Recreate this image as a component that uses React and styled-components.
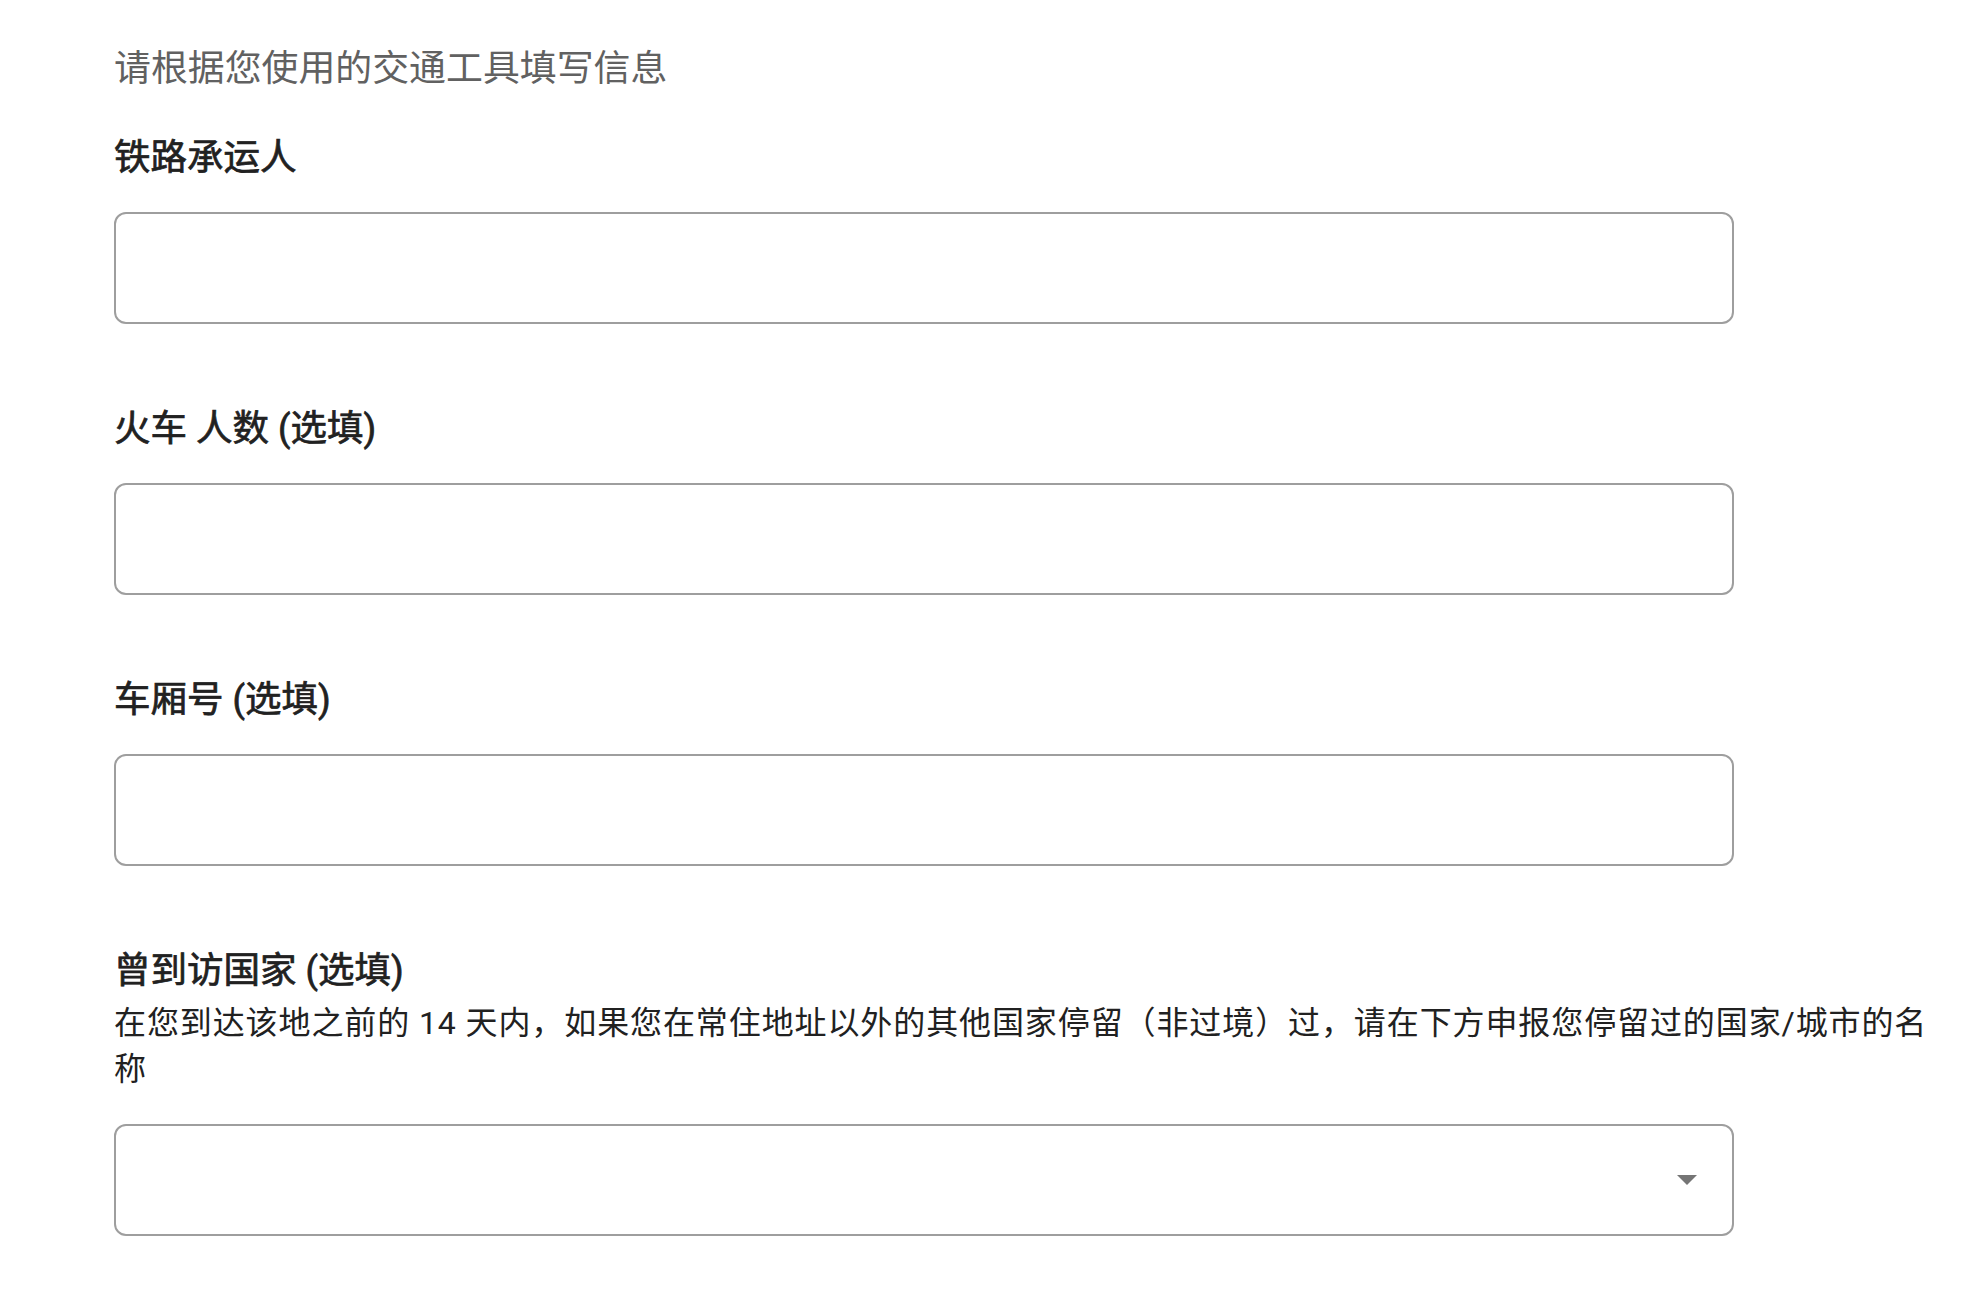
import React from "react";
import styled, { createGlobalStyle } from "styled-components";

const GlobalStyle = createGlobalStyle`
  body {
    margin: 0;
    background: #ffffff;
    font-family: Roboto, "Noto Sans CJK SC", sans-serif;
  }
`;

const fields = [
  { id: "carrier", label: "铁路承运人" },
  { id: "passengers", label: "火车 人数 (选填)" },
  { id: "coach", label: "车厢号 (选填)" },
];

const App = () => {
  return (
    <>
      <GlobalStyle />
      <Page>
        <Intro>请根据您使用的交通工具填写信息</Intro>
        {fields.map((field) => (
          <Field key={field.id}>
            <Label htmlFor={field.id}>{field.label}</Label>
            <Input id={field.id} type="text" />
          </Field>
        ))}
        <Field last>
          <Label>曾到访国家 (选填)</Label>
          <Hint>
            在您到达该地之前的 14 天内，如果您在常住地址以外的其他国家停留（非过境）过，请在下方申报您停留过的国家/城市的名称
          </Hint>
          <Select>
            <svg width="20" height="10" viewBox="0 0 20 10">
              <path d="M0 0 L20 0 L10 10 Z" fill="#757575" />
            </svg>
          </Select>
        </Field>
      </Page>
    </>
  );
};

export default App;

const Page = styled.div`
  padding: 45px 40px 40px 114px;
  box-sizing: border-box;
  width: 100%;
`;

const Intro = styled.p`
  margin: 0 0 37px;
  font-size: 36.9px;
  line-height: 48px;
  color: #616161;
`;

const Field = styled.div`
  display: flex;
  flex-direction: column;
  align-items: flex-start;
  margin-bottom: ${(props) => (props.last ? "0" : "77px")};
`;

const Label = styled.label`
  padding-top: 4px;
  font-size: 36.5px;
  line-height: 48px;
  font-weight: 400;
  -webkit-text-stroke: 0.7px #212121;
  color: #212121;
`;

const Hint = styled.p`
  margin: 5px 0 0;
  font-size: 32px;
  line-height: 46px;
  letter-spacing: 0.9px;
  color: #212121;
`;

const Input = styled.input`
  display: block;
  margin-top: 30px;
  width: 1620px;
  height: 112px;
  box-sizing: border-box;
  border: 2px solid #9e9e9e;
  border-radius: 12px;
  background: #ffffff;
  font-size: 32px;
  padding: 0 24px;
  outline: none;
`;

const Select = styled.div`
  margin-top: 32px;
  width: 1620px;
  height: 112px;
  box-sizing: border-box;
  border: 2px solid #9e9e9e;
  border-radius: 12px;
  display: flex;
  align-items: center;
  justify-content: flex-end;
  padding-right: 35px;
`;
